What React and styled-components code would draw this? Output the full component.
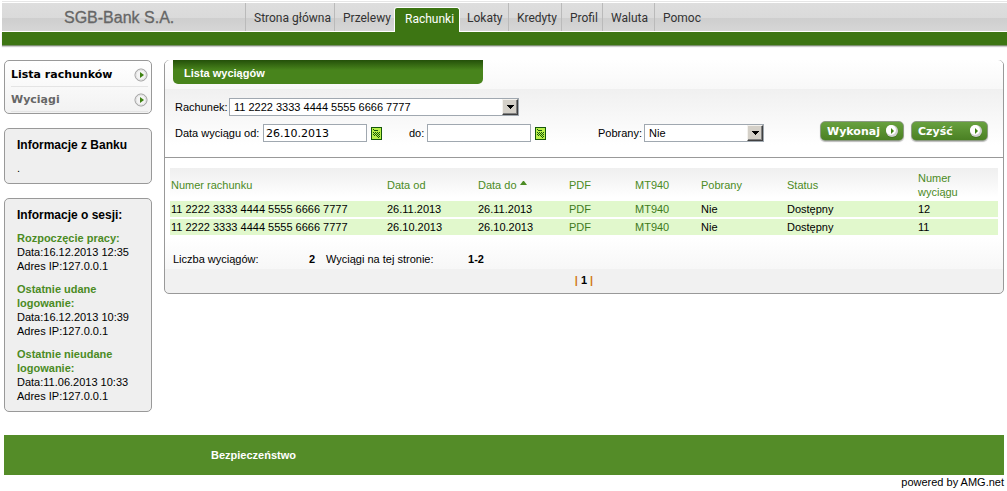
import React, { useState } from 'react';
import { createGlobalStyle, styled } from 'styled-components';

const tabs = [
    { name: 'Strona główna', width: 89 },
    { name: 'Przelewy', width: 60 },
    { name: 'Rachunki', width: 66 },
    { name: 'Lokaty', width: 48 },
    { name: 'Kredyty', width: 53 },
    { name: 'Profil', width: 41 },
    { name: 'Waluta', width: 52 },
    { name: 'Pomoc', width: 60 },
];

const sessions = [
    { title: 'Rozpoczęcie pracy:', date: '16.12.2013 12:35', ip: '127.0.0.1' },
    { title: 'Ostatnie udane logowanie:', date: '16.12.2013 10:39', ip: '127.0.0.1' },
    { title: 'Ostatnie nieudane logowanie:', date: '11.06.2013 10:33', ip: '127.0.0.1' },
];

const account = '11 2222 3333 4444 5555 6666 7777';

const statements = [
    { number: '12', from: '26.11.2013', to: '26.11.2013', downloaded: 'Nie', status: 'Dostępny' },
    { number: '11', from: '26.10.2013', to: '26.10.2013', downloaded: 'Nie', status: 'Dostępny' },
];

const columnWidths = [216, 91, 91, 66, 66, 86, 131, 81];

const RoundArrow = () => (
    <svg width="14" height="14" viewBox="0 0 14 14" aria-hidden="true">
        <circle cx="7" cy="7" r="6" fill="#f4f4f4" stroke="#999" />
        <circle cx="7" cy="7" r="5" fill="none" stroke="#ddd" />
        <path d="M6 4v6l4-3z" fill="#3f8212" />
    </svg>
);

const ButtonArrow = () => (
    <svg width="14" height="14" viewBox="0 0 14 14" aria-hidden="true">
        <circle cx="7" cy="8" r="6" fill="#3c6b1d" opacity="0.6" />
        <circle cx="7" cy="7" r="6" fill="#d0d0d0" />
        <circle cx="6" cy="6" r="5" fill="#fff" />
        <path d="M6 4v6l3-3z" fill="#3f8212" />
    </svg>
);

const CalendarIcon = () => (
    <svg width="11" height="13" viewBox="0 0 11 13" shapeRendering="crispEdges" aria-hidden="true">
        <rect x="0" y="0" width="11" height="13" rx="1" fill="#14570a" />
        <rect x="1" y="1" width="9" height="11" fill="#b9f04a" />
        <path d="M2 2h1v1h-1zM3 3h4v1h-4z" fill="#14570a" />
        <path
            d="M2 5h1v1h-1zM4 5h1v1h-1zM6 5h1v1h-1zM8 5h1v1h-1zM3 6h1v1h-1zM5 6h1v1h-1zM7 6h1v1h-1zM2 7h1v1h-1zM4 7h1v1h-1zM6 7h1v1h-1zM8 7h1v1h-1zM3 8h1v1h-1zM5 8h1v1h-1zM7 8h1v1h-1zM6 9h1v1h-1zM8 9h1v1h-1zM7 10h1v1h-1z"
            fill="#14570a"
        />
    </svg>
);

const Dropdown = ({ id, width, options }) => (
    <SelectBox $width={width}>
        <Select id={id}>
            {options.map((option) => (
                <option key={option}>{option}</option>
            ))}
        </Select>
        <SelectArrow>
            <svg width="7" height="4" viewBox="0 0 7 4" shapeRendering="crispEdges" aria-hidden="true">
                <path d="M0 0h7v1h-7zM1 1h5v1h-5zM2 2h3v1h-3zM3 3h1v1h-1z" fill="#000" />
            </svg>
        </SelectArrow>
    </SelectBox>
);

const App = () => {
    const [dateFrom, setDateFrom] = useState('26.10.2013');
    const [dateTo, setDateTo] = useState('');

    return (
        <>
            <GlobalStyle />
            <Header>
                <TopBar>
                    <BankName>SGB-Bank S.A.</BankName>
                    <Nav>
                        {tabs.map((tab) => (
                            <Tab key={tab.name} href="#" $width={tab.width} $active={tab.name === 'Rachunki'}>
                                {tab.name}
                            </Tab>
                        ))}
                    </Nav>
                </TopBar>
                <GreenBar />
            </Header>

            <Page>
                <Sidebar>
                    <Menu>
                        <MenuItem href="#" $active>
                            Lista rachunków
                            <RoundArrow />
                        </MenuItem>
                        <MenuItem href="#">
                            Wyciągi
                            <RoundArrow />
                        </MenuItem>
                    </Menu>

                    <InfoBox>
                        <InfoTitle>Informacje z Banku</InfoTitle>
                        <InfoText>.</InfoText>
                    </InfoBox>

                    <InfoBox>
                        <InfoTitle>Informacje o sesji:</InfoTitle>
                        {sessions.map((session) => (
                            <InfoText key={session.title}>
                                <SessionTitle>{session.title}</SessionTitle>
                                <div>Data:{session.date}</div>
                                <div>Adres IP:{session.ip}</div>
                            </InfoText>
                        ))}
                    </InfoBox>
                </Sidebar>

                <Panel>
                    <Filters onSubmit={(e) => e.preventDefault()}>
                        <PanelTitle>Lista wyciągów</PanelTitle>

                        <FormRow>
                            <Label htmlFor="account" $width={52}>Rachunek:</Label>
                            <Dropdown id="account" width={290} options={[account]} />
                        </FormRow>

                        <FormRow>
                            <Label htmlFor="dateFrom" $width={86}>Data wyciągu od:</Label>
                            <Input id="dateFrom" value={dateFrom} onChange={(e) => setDateFrom(e.target.value)} />
                            <IconButton type="button" aria-label="Kalendarz"><CalendarIcon /></IconButton>

                            <Label htmlFor="dateTo" $width={16} $gap={25}>do:</Label>
                            <Input id="dateTo" value={dateTo} onChange={(e) => setDateTo(e.target.value)} />
                            <IconButton type="button" aria-label="Kalendarz"><CalendarIcon /></IconButton>

                            <Label htmlFor="downloaded" $width={44} $gap={50}>Pobrany:</Label>
                            <Dropdown id="downloaded" width={120} options={['Nie', 'Tak']} />

                            <Buttons>
                                <Button type="submit" $width={84}>Wykonaj <ButtonArrow /></Button>
                                <Button type="reset" $width={77}>Czyść <ButtonArrow /></Button>
                            </Buttons>
                        </FormRow>
                    </Filters>

                    <Table>
                        <colgroup>
                            {columnWidths.map((width, i) => (
                                <Col key={i} $width={width} />
                            ))}
                        </colgroup>
                        <thead>
                            <tr>
                                <Th>Numer rachunku</Th>
                                <Th>Data od</Th>
                                <Th>
                                    Data do{' '}
                                    <SortIcon width="7" height="4" viewBox="0 0 7 4" aria-hidden="true">
                                        <path d="M0 4L3 0h1l3 4z" fill="#4b8b24" />
                                    </SortIcon>
                                </Th>
                                <Th>PDF</Th>
                                <Th>MT940</Th>
                                <Th>Pobrany</Th>
                                <Th>Status</Th>
                                <Th>Numer<br />wyciągu</Th>
                            </tr>
                        </thead>
                        <tbody>
                            {statements.map((item) => (
                                <tr key={item.number}>
                                    <Td>{account}</Td>
                                    <Td>{item.from}</Td>
                                    <Td>{item.to}</Td>
                                    <Td><FileLink href="#">PDF</FileLink></Td>
                                    <Td><FileLink href="#">MT940</FileLink></Td>
                                    <Td>{item.downloaded}</Td>
                                    <Td>{item.status}</Td>
                                    <Td>{item.number}</Td>
                                </tr>
                            ))}
                        </tbody>
                    </Table>

                    <Summary>
                        <SummaryItem $width={142}>
                            <span>Liczba wyciągów:</span>
                            <b>2</b>
                        </SummaryItem>
                        <SummaryItem $width={158}>
                            <span>Wyciągi na tej stronie:</span>
                            <b>1-2</b>
                        </SummaryItem>
                    </Summary>
                    <Pager>
                        <Bar>|</Bar> 1 <Bar>|</Bar>
                    </Pager>
                </Panel>
            </Page>

            <Footer>
                <FooterLink href="#">Bezpieczeństwo</FooterLink>
            </Footer>
            <Powered>powered by AMG.net</Powered>
        </>
    );
};

const GlobalStyle = createGlobalStyle`
    * {
        box-sizing: border-box;
    }

    body {
        margin: 0;
        background: #fff;
        color: #000;
        font-family: 'Liberation Sans', Arial, sans-serif;
        font-size: 11px;
        line-height: 14px;
    }

    a {
        text-decoration: none;
    }

    svg {
        display: block;
        flex-shrink: 0;
    }
`;

const Header = styled.header`
    margin-left: 2px;
    padding-top: 1px;
`;

const TopBar = styled.div`
    display: flex;
    height: 31px;
    border-top: 1px solid #e6e6e6;
    border-bottom: 1px solid #fff;
    box-shadow: inset 0 1px #fff;
    background: linear-gradient(#dedede 0, #dadada 16px, #cecece 16px, #d6d6d6 100%);
`;

const BankName = styled.div`
    width: 243px;
    padding-left: 62px;
    color: #666;
    font-size: 16px;
    line-height: 31px;
    -webkit-text-stroke: 0.3px #666;
`;

const Nav = styled.nav`
    display: flex;
    align-items: flex-end;
`;

const Tab = styled.a`
    width: ${({ $width }) => $width}px;
    height: ${({ $active }) => ($active ? 25 : 28)}px;
    margin-bottom: ${({ $active }) => ($active ? -1 : 0)}px;
    padding-left: ${({ $active }) => ($active ? 10 : 8)}px;
    border-left: 1px solid #bababa;
    color: #333;
    font-family: Roboto, sans-serif;
    font-size: 12px;
    line-height: 31px;
    white-space: nowrap;

    ${({ $active }) =>
        $active &&
        `
        border: 1px solid #fff;
        border-bottom: 0;
        border-radius: 3px 3px 0 0;
        background: #3d7513;
        color: #fff;
        line-height: 23px;

        & + a {
            border-left-color: transparent;
            padding-left: 6px;
        }
    `}
`;

const GreenBar = styled.div`
    height: 14px;
    border-bottom: 1px solid #7b8f6d;
    background: #3d7513;
    box-shadow: 0 1px 1px #ccc;
`;

const Page = styled.div`
    display: flex;
    align-items: flex-start;
    gap: 12px;
    padding: 14px 3px 0 4px;
`;

const Sidebar = styled.aside`
    display: flex;
    flex-direction: column;
    flex: 0 0 148px;
    gap: 14px;
`;

const Menu = styled.nav`
    padding: 1px 3px 1px 6px;
    border: 1px solid #999;
    border-radius: 5px;
    background: linear-gradient(#fff, #f2f2f2);
`;

const MenuItem = styled.a`
    display: flex;
    align-items: center;
    justify-content: space-between;
    height: 25px;
    padding-top: 1px;
    border-bottom: 1px solid #e4e4e4;
    color: ${({ $active }) => ($active ? '#000' : '#666')};
    font-family: 'DejaVu Sans', Verdana, sans-serif;
    font-weight: bold;
`;

const InfoBox = styled.section`
    padding: 9px 12px 8px;
    border: 1px solid #999;
    border-radius: 5px;
    background: #efefef;
`;

const InfoTitle = styled.h2`
    margin: 0;
    font-size: 12px;
    line-height: 14px;
`;

const InfoText = styled.div`
    margin-top: 9px;
`;

const SessionTitle = styled.div`
    color: #4b8b24;
    font-weight: bold;
`;

const Panel = styled.main`
    flex: 1;
    min-width: 0;
    border: 1px solid #999;
    border-radius: 5px;
    background: linear-gradient(to top, #f1f1f1 24px, #f7f7f7 24px, #fff 56px);
`;

const Filters = styled.form`
    height: 98px;
    border-bottom: 1px solid #999;
    border-radius: 5px 5px 0 0;
    background: linear-gradient(#fff 0, #f8f8f8 29px, #f0f0f0 29px, #fff 85px);
`;

const PanelTitle = styled.h1`
    width: 310px;
    height: 24px;
    margin: -1px 0 13px 8px;
    padding-left: 11px;
    border-radius: 0 0 5px 5px;
    background: linear-gradient(#24500a 0, #48841c 10px, #48841c 100%);
    color: #fff;
    font-size: 11px;
    line-height: 26px;
`;

const FormRow = styled.div`
    display: flex;
    align-items: center;
    gap: 2px;
    height: 20px;
    padding: 0 15px 0 10px;

    & + & {
        margin-top: 6px;
    }
`;

const Label = styled.label`
    width: ${({ $width }) => $width}px;
    margin-left: ${({ $gap }) => $gap || 0}px;
    white-space: nowrap;
`;

const Input = styled.input`
    width: 104px;
    height: 18px;
    padding: 0 2px;
    border: 1px solid #a0a8b0;
    background: #fff;
    color: #000;
    font: 11px 'DejaVu Sans', Verdana, sans-serif;
`;

const IconButton = styled.button`
    margin-left: 2px;
    padding: 0;
    border: 0;
    background: none;
    cursor: pointer;
`;

const SelectBox = styled.div`
    position: relative;
    width: ${({ $width }) => $width}px;
    height: 18px;
`;

const Select = styled.select`
    display: block;
    width: 100%;
    height: 100%;
    padding: 0 18px 0 4px;
    border: 1px solid #a0a8b0;
    border-radius: 0;
    background: #fff;
    color: #000;
    font: 11px 'Liberation Sans', Arial, sans-serif;
    appearance: none;
`;

const SelectArrow = styled.span`
    position: absolute;
    top: 1px;
    right: 1px;
    display: grid;
    place-items: center;
    width: 16px;
    height: 16px;
    border: 1px solid;
    border-color: #f4f2ee #404040 #404040 #f4f2ee;
    background: #d4d0c8;
    box-shadow: inset -1px -1px #808080;
    pointer-events: none;
`;

const Buttons = styled.div`
    display: flex;
    gap: 7px;
    margin: -4px 0 0 auto;
`;

const Button = styled.button`
    display: flex;
    align-items: center;
    justify-content: space-between;
    width: ${({ $width }) => $width}px;
    height: 20px;
    padding: 0 4px 0 6px;
    border: 1px solid #8d9a84;
    border-radius: 5px;
    background: linear-gradient(#68a13f, #4a8023);
    box-shadow: 0 1px 1px #bbb;
    color: #fff;
    font: bold 11px 'DejaVu Sans', Verdana, sans-serif;
    cursor: pointer;
`;

const Table = styled.table`
    width: calc(100% - 10px);
    margin: 10px 5px 0;
    border-collapse: collapse;
    table-layout: fixed;

    thead {
        background: linear-gradient(#efefef, #fff 90%);
    }

    tbody tr {
        background: #e1f8cc;
    }

    tbody tr + tr {
        border-top: 2px solid #fff;
    }
`;

const Col = styled.col`
    width: ${({ $width }) => $width}px;
`;

const Th = styled.th`
    height: 33px;
    padding: 2px 1px;
    color: #4b8b24;
    font-weight: normal;
    text-align: left;
`;

const SortIcon = styled.svg`
    display: inline-block;
    vertical-align: 4px;
`;

const Td = styled.td`
    height: 16px;
    padding: 1px;
`;

const FileLink = styled.a`
    color: #3f7a1c;
`;

const Summary = styled.div`
    display: flex;
    gap: 11px;
    margin-top: 17px;
    padding-left: 8px;
`;

const SummaryItem = styled.div`
    display: flex;
    justify-content: space-between;
    width: ${({ $width }) => $width}px;
`;

const Pager = styled.div`
    margin: 7px 0 6px;
    font-weight: bold;
    text-align: center;
`;

const Bar = styled.span`
    color: #d07818;
`;

const Footer = styled.footer`
    margin: 23px 3px 0 4px;
    padding: 13px 0 13px 207px;
    background: #548c28;
`;

const FooterLink = styled.a`
    color: #fff;
    font-weight: bold;
`;

const Powered = styled.div`
    margin-right: 3px;
    text-align: right;
`;

export default App;
